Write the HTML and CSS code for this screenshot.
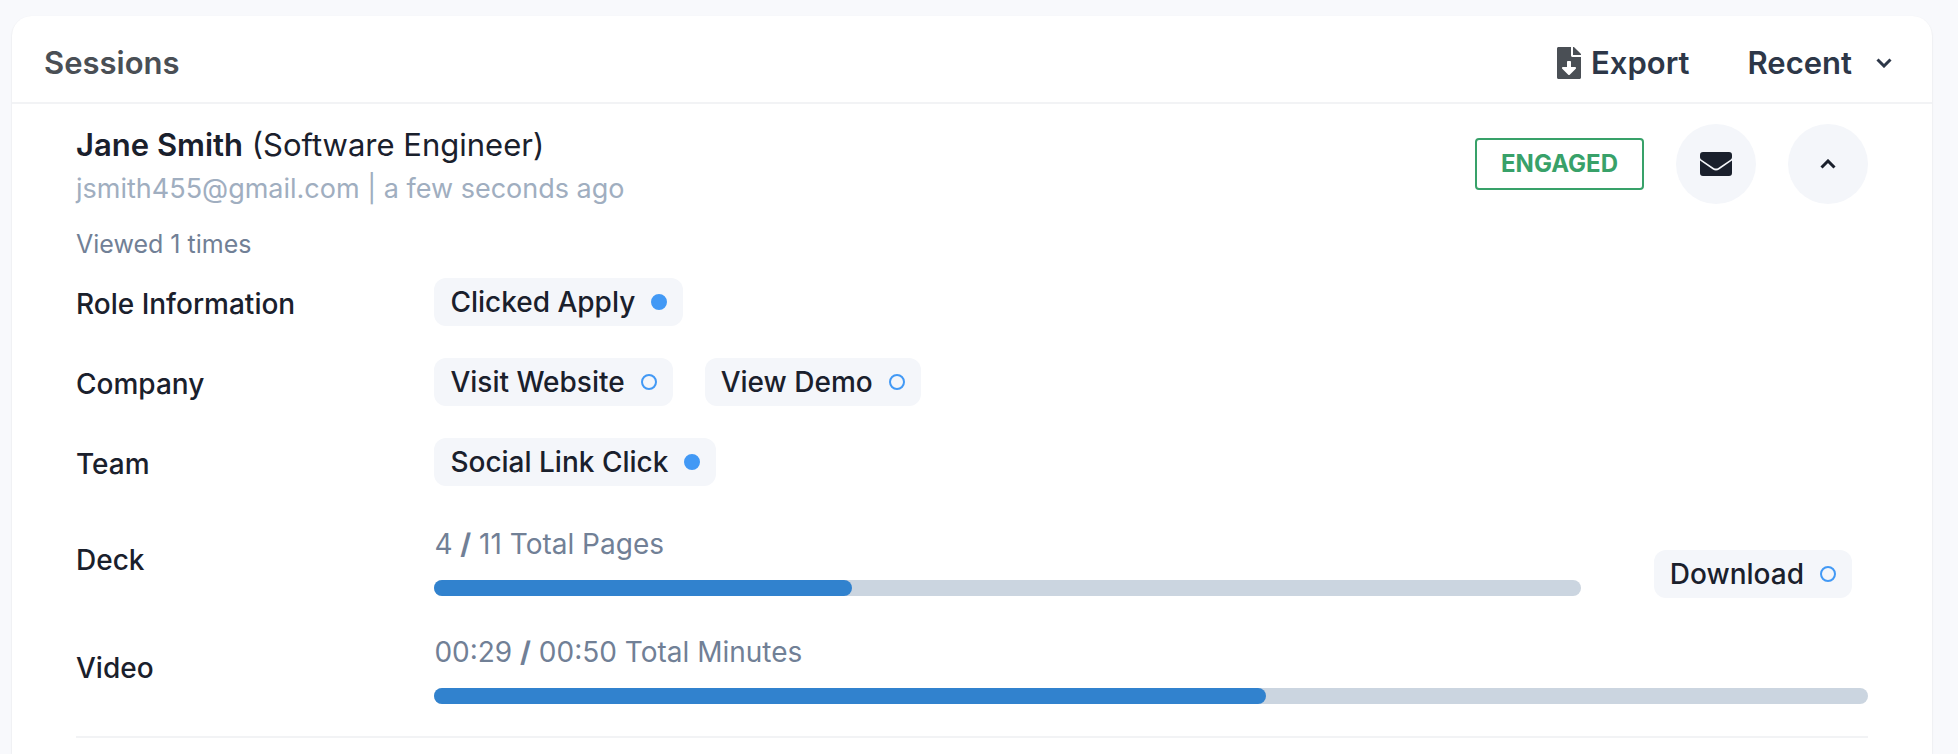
FILE: index.html
```html
<!DOCTYPE html>
<html lang="en">
<head>
<meta charset="utf-8">
<title>Sessions</title>
<link rel="stylesheet" href="styles.css">
</head>
<body>
<main class="card">
  <header class="card-header">
    <h1 class="card-title">Sessions</h1>
    <div class="card-tools">
      <button type="button" class="tool">
        <svg class="icon-file" viewBox="0 0 384 512" aria-hidden="true"><path d="M224 136V0H24C10.700 0 0 10.700 0 24v464c0 13.300 10.700 24 24 24h336c13.300 0 24-10.700 24-24V160H248c-13.200 0-24-10.800-24-24zm76.450 211.360l-96.420 95.700c-6.650 6.610-17.390 6.610-24.040 0l-96.420-95.700C73.420 337.290 80.540 320 94.820 320H160v-80c0-8.840 7.160-16 16-16h32c8.840 0 16 7.160 16 16v80h65.180c14.280 0 21.400 17.290 11.270 27.360zM377 105L279.100 7c-4.500-4.500-10.600-7-17-7H256v128h128v-6.100c0-6.300-2.500-12.400-7-16.900z"/></svg>
        Export
      </button>
      <button type="button" class="tool tool-sort" aria-haspopup="listbox">
        Recent
        <svg class="icon-chevron" viewBox="0 0 16 10" aria-hidden="true"><path d="M1.500 1.500L8 8l6.500-6.500"/></svg>
      </button>
    </div>
  </header>

  <article class="session">
    <div class="session-head">
      <div class="person">
        <h2 class="person-name"><strong>Jane Smith</strong> (Software Engineer)</h2>
        <p class="person-meta">jsmith455@gmail.com | a few seconds ago</p>
      </div>
      <div class="actions">
        <span class="badge">ENGAGED</span>
        <button type="button" class="round" aria-label="Send email">
          <svg class="icon-mail" viewBox="0 0 32 24" aria-hidden="true"><path d="M3 0h26a3 3 0 0 1 3 3v2.200c0 .9-.4 1.700-1.200 2.200L18.200 15.900c-1.300.9-3.100.9-4.400 0L1.200 7.400C.4 6.900 0 6.100 0 5.200V3a3 3 0 0 1 3-3z"/><path d="M0 8.600l12.900 8.900c1.900 1.200 4.300 1.200 6.200 0L32 8.600V21a3 3 0 0 1-3 3H3a3 3 0 0 1-3-3z"/></svg>
        </button>
        <button type="button" class="round" aria-label="Collapse session" aria-expanded="true">
          <svg class="icon-chevron" viewBox="0 0 16 10" aria-hidden="true"><path d="M1.500 8.500L8 2l6.500 6.500"/></svg>
        </button>
      </div>
    </div>
    <p class="views">Viewed 1 times</p>

    <div class="info">
      <section class="row">
        <h3 class="label">Role Information</h3>
        <div class="chips"><span class="chip">Clicked Apply<i class="dot dot-on"></i></span></div>
      </section>
      <section class="row">
        <h3 class="label">Company</h3>
        <div class="chips">
          <span class="chip">Visit Website<i class="dot"></i></span>
          <span class="chip">View Demo<i class="dot"></i></span>
        </div>
      </section>
      <section class="row">
        <h3 class="label">Team</h3>
        <div class="chips"><span class="chip">Social Link Click<i class="dot dot-on"></i></span></div>
      </section>
    </div>

    <div class="metrics">
      <section class="row metric">
        <h3 class="label">Deck</h3>
        <div class="metric-body metric-split">
          <div class="progress">
            <p class="progress-text">4 <b>/</b> 11 Total Pages</p>
            <div class="track"><div class="fill" style="width:36.400%"></div></div>
          </div>
          <div class="metric-side"><span class="chip">Download<i class="dot"></i></span></div>
        </div>
      </section>
      <section class="row metric">
        <h3 class="label">Video</h3>
        <div class="metric-body">
          <div class="progress">
            <p class="progress-text">00:29 <b>/</b> 00:50 Total Minutes</p>
            <div class="track"><div class="fill" style="width:58%"></div></div>
          </div>
        </div>
      </section>
    </div>
  </article>
</main>
</body>
</html>
```
FILE: styles.css
```css
* {
  box-sizing: border-box;
}

body {
  margin: 0;
  padding: 16px 26px 0 12px;
  background: #f8f9fc;
  color: #1a202c;
  font-family: Inter, "Liberation Sans", sans-serif;
  font-size: 28px;
}

h1,
h2,
h3,
p {
  margin: 0;
  font-weight: 400;
}

button {
  border: 0;
  padding: 0;
  background: none;
  color: inherit;
  font: inherit;
  cursor: pointer;
}

.card {
  min-height: calc(100vh - 16px);
  background: #fff;
  border-radius: 20px 20px 0 0;
  box-shadow: 0 1px 2px rgba(0, 0, 0, 0.12);
}

.card-header {
  display: flex;
  align-items: center;
  justify-content: space-between;
  height: 88px;
  padding: 8px 40px 0 32px;
  border-bottom: 2px solid #f2f3f5;
}

.card-title {
  color: #4a4f55;
  font-size: 31px;
  font-weight: 600;
  line-height: 40px;
}

.card-tools,
.tool {
  display: flex;
  align-items: center;
}

.card-tools {
  gap: 58px;
}

.tool {
  gap: 10px;
  color: #2d3748;
  font-size: 31px;
  font-weight: 600;
  line-height: 40px;
}

.tool-sort {
  gap: 24px;
}

.icon-file {
  width: 24px;
  height: 32px;
  fill: #4a4f55;
}

.icon-chevron {
  width: 16px;
  height: 10px;
  fill: none;
  stroke: currentColor;
  stroke-width: 3px;
}

.session {
  margin: 0 64px;
  padding: 20px 0 30px;
  border-bottom: 2px solid #f2f3f5;
}

.session-head {
  display: flex;
  align-items: flex-start;
  justify-content: space-between;
}

.person {
  display: grid;
  gap: 2px;
  line-height: 42px;
}

.person-name {
  font-size: 31px;
}

.person-name strong {
  font-weight: 600;
}

.person-meta {
  color: #a0aec0;
  font-size: 27px;
}

.actions {
  display: flex;
  align-items: center;
  gap: 32px;
}

.badge {
  padding: 8px 24px;
  border: 2px solid #38a169;
  border-radius: 4px;
  color: #38a169;
  font-size: 24px;
  font-weight: 700;
  line-height: 32px;
}

.round {
  display: grid;
  place-items: center;
  width: 80px;
  height: 80px;
  border-radius: 50%;
  background: #f4f6fa;
}

.icon-mail {
  width: 32px;
  height: 24px;
  fill: currentColor;
}

.views {
  margin-top: 18px;
  color: #718096;
  font-size: 25px;
  line-height: 32px;
}

.info {
  display: grid;
  gap: 28px;
  margin-top: 18px;
}

.row {
  display: grid;
  grid-template-columns: 20% 1fr;
  align-items: start;
}

.label {
  font-size: 28px;
  font-weight: 500;
  line-height: 52px;
}

.chips {
  display: flex;
  gap: 32px;
}

.chip {
  display: inline-flex;
  align-items: center;
  gap: 16px;
  height: 48px;
  padding: 0 16px;
  border-radius: 12px;
  background: #f4f6fa;
  font-weight: 500;
}

.dot {
  width: 16px;
  height: 16px;
  border: 2px solid #4299f5;
  border-radius: 50%;
}

.dot-on {
  background: #4299f5;
}

.metrics {
  display: grid;
  gap: 32px;
  margin-top: 32px;
}

.metric {
  align-items: center;
  min-height: 76px;
}

.metric-split {
  display: grid;
  grid-template-columns: 4fr 1fr;
  align-items: center;
}

.metric-side {
  display: flex;
  justify-content: flex-end;
  padding: 28px 16px 0 0;
}

.progress {
  display: grid;
  gap: 16px;
}

.progress-text {
  color: #718096;
  line-height: 40px;
}

.track {
  height: 16px;
  border-radius: 8px;
  background: #cbd5e0;
}

.fill {
  height: 100%;
  border-radius: 8px;
  background: #3182ce;
}
```
